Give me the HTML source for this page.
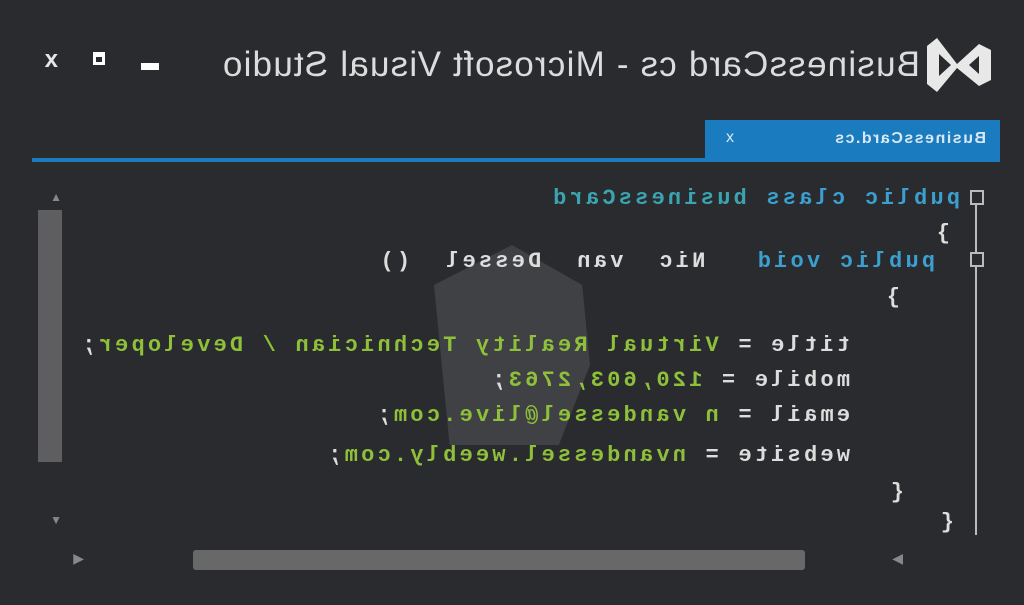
<!DOCTYPE html>
<html><head><meta charset="utf-8"><style>
html,body{margin:0;padding:0;background:#2a2b2e;width:1024px;height:605px;overflow:hidden}
#m{position:absolute;left:0;top:0;width:1024px;height:605px;transform:scaleX(-1);font-family:"Liberation Sans",sans-serif}
.a{position:absolute;white-space:pre}
.code{font-family:"Liberation Mono",monospace;font-weight:bold;font-size:22px;letter-spacing:3.2px;line-height:26px}
</style></head><body><div id="m">
<svg class="a" style="left:29px;top:34px" width="70" height="62" viewBox="0 0 70 62">
<path d="M4 16 L16 10 L38 30 L58 4 L68 12 L68 50 L58 58 L38 34 L16 52 L4 46 Z M16 22 L16 40 L26 31 Z M56 20 L44 31 L56 42 Z" fill="#e8e8e8" fill-rule="evenodd"/></svg>
<div class="a" style="left:104px;top:45px;font-size:35px;letter-spacing:1.2px;color:#dcdcdc">BusinessCard cs - Microsoft Visual Studio</div>
<div class="a" style="left:865px;top:63px;width:18px;height:7px;background:#fff"></div>
<div class="a" style="left:919px;top:52px;width:12px;height:13px;border:3px solid #fff;border-top-width:5px;box-sizing:border-box"></div>
<div class="a" style="left:966px;top:46px;font-size:24px;color:#e6e6e6;font-weight:bold">x</div>
<div class="a" style="left:24px;top:120px;width:295px;height:40px;background:#1a7bbf"></div>
<div class="a" style="left:38px;top:130px;font-size:16px;letter-spacing:1.5px;color:#d8e8f4;font-weight:bold">BusinessCard.cs</div>
<div class="a" style="left:290px;top:129px;font-size:16px;color:#d8e8f4">x</div>
<div class="a" style="left:24px;top:158px;width:968px;height:4px;background:#1a7bbf"></div>
<div class="a" style="left:434px;top:245px;width:156px;height:200px;background:#404144;clip-path:polygon(50% 0,100% 20%,95% 60%,90% 100%,20% 100%,0 60%,5% 20%)"></div>
<div class="a" style="left:962px;top:210px;width:24px;height:252px;background:#5e5e60"></div>
<div class="a" style="left:962px;top:190px;font-size:12px;color:#888">▲</div>
<div class="a" style="left:962px;top:513px;font-size:12px;color:#888">▼</div>
<div class="a" style="left:219px;top:550px;width:612px;height:20px;background:#686868;border-radius:3px"></div>
<div class="a" style="left:940px;top:550px;font-size:14px;color:#888">◀</div>
<div class="a" style="left:121px;top:550px;font-size:14px;color:#888">▶</div>
<div class="a" style="left:47px;top:205px;width:2px;height:330px;background:#bbb"></div>
<div class="a" style="left:40px;top:190px;width:10px;height:11px;border:2px solid #bbb;background:#2a2b2e"></div>
<div class="a" style="left:40px;top:252px;width:10px;height:11px;border:2px solid #bbb;background:#2a2b2e"></div>
<div class="a code" style="left:64px;top:186px;color:#3aa5b0"><span style="color:#3b9fd0">public class</span> businessCard</div>
<div class="a code" style="left:74px;top:221px;color:#ddd">}</div>
<div class="a code" style="left:89px;top:249px;color:#ddd"><span style="color:#3b9fd0">public void</span>   Nic  van  Dessel  ()</div>
<div class="a code" style="left:124px;top:285px;color:#ddd">}</div>
<div class="a code" style="left:174px;top:333px;color:#ddd">title = <span style="color:#8fc03a">Virtual Reality Technician / Developer</span>;</div>
<div class="a code" style="left:174px;top:368px;color:#ddd">mobile = <span style="color:#8fc03a">120,603,2763</span>;</div>
<div class="a code" style="left:174px;top:403px;color:#ddd">email = <span style="color:#8fc03a">n vandessel@live.com</span>;</div>
<div class="a code" style="left:174px;top:443px;color:#ddd">website = <span style="color:#8fc03a">nvandessel.weebly.com</span>;</div>
<div class="a code" style="left:120px;top:480px;color:#ddd">{</div>
<div class="a code" style="left:70px;top:510px;color:#ddd">{</div>
</div></body></html>
